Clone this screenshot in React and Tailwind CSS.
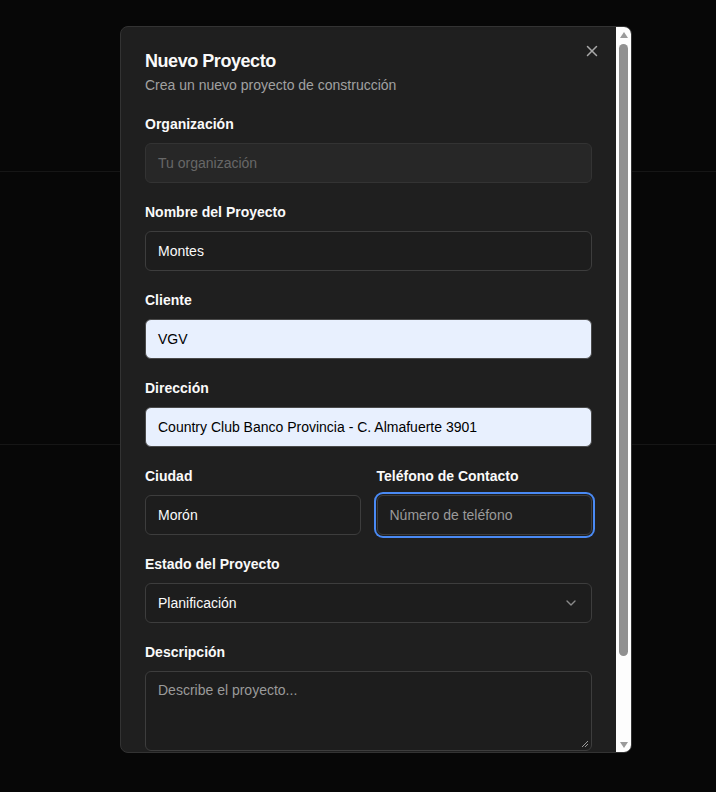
import React from "react";

function Label({ children }) {
  return (
    <div className="h-5 mb-2 text-[14px] leading-[18px] font-semibold text-[#fafafa]">
      {children}
    </div>
  );
}

const baseInput =
  "w-full h-10 rounded-md border px-3 text-[14px] leading-5 outline-none";

export default function App() {
  return (
    <div
      className="relative w-full h-[792px] overflow-hidden bg-[#070707]"
      style={{ fontFamily: '"Liberation Sans", Arial, sans-serif' }}
    >
      <div className="h-[172px] border-b border-[#161616]" />
      <div className="h-[273px] border-b border-[#161616]" />

      <div className="absolute left-[120px] top-[26px] w-[512px] h-[727px] rounded-lg border border-[#333333] bg-[#1f1f1f] flex overflow-hidden">
        <div className="relative flex-1 overflow-hidden px-6 pt-[25px]">
          <button className="absolute right-[15px] top-[15px] w-[18px] h-[18px] text-[#a8a8a8]">
            <svg width="18" height="18" viewBox="0 0 24 24" fill="none" stroke="currentColor" strokeWidth="2" strokeLinecap="round" strokeLinejoin="round">
              <path d="M18 6 6 18" />
              <path d="m6 6 12 12" />
            </svg>
          </button>

          <div className="text-[18px] leading-[18px] font-semibold text-[#fafafa] tracking-tight">
            Nuevo Proyecto
          </div>
          <div className="mt-1.5 h-5 text-[14px] leading-[18px] text-[#a1a1a1]">
            Crea un nuevo proyecto de construcción
          </div>

          <div className="mt-[19px] flex flex-col gap-5">
            <div>
              <Label>Organización</Label>
              <div className={baseInput + " flex items-center bg-[#272727] border-[#333333] text-[#676767]"}>
                Tu organización
              </div>
            </div>

            <div>
              <Label>Nombre del Proyecto</Label>
              <div className={baseInput + " flex items-center bg-[#1d1d1d] border-[#3d3d3d] text-[#fafafa]"}>
                Montes
              </div>
            </div>

            <div>
              <Label>Cliente</Label>
              <div className={baseInput + " flex items-center bg-[#e8f0fe] border-[#4a4a4a] text-black"}>
                VGV
              </div>
            </div>

            <div>
              <Label>Dirección</Label>
              <div className={baseInput + " flex items-center bg-[#e8f0fe] border-[#4a4a4a] text-black"}>
                Country Club Banco Provincia - C. Almafuerte 3901
              </div>
            </div>

            <div className="grid grid-cols-2 gap-4">
              <div>
                <Label>Ciudad</Label>
                <div className={baseInput + " flex items-center bg-[#1d1d1d] border-[#3d3d3d] text-[#fafafa]"}>
                  Morón
                </div>
              </div>
              <div>
                <Label>Teléfono de Contacto</Label>
                <div className={baseInput + " flex items-center bg-[#1d1d1d] border-[#3d3d3d] text-[#9a9a9a] ring-2 ring-[#4a8af4] ring-offset-1 ring-offset-[#1f1f1f]"}>
                  Número de teléfono
                </div>
              </div>
            </div>

            <div>
              <Label>Estado del Proyecto</Label>
              <div className={baseInput + " flex items-center justify-between bg-[#1d1d1d] border-[#3d3d3d] text-[#fafafa]"}>
                <span>Planificación</span>
                <svg width="16" height="16" viewBox="0 0 24 24" fill="none" stroke="#8a8a8a" strokeWidth="2" strokeLinecap="round" strokeLinejoin="round">
                  <path d="m6 9 6 6 6-6" />
                </svg>
              </div>
            </div>

            <div>
              <Label>Descripción</Label>
              <div className="relative w-full h-20 rounded-md border border-[#3d3d3d] bg-[#1d1d1d] px-3 py-2 text-[14px] leading-5 text-[#9a9a9a]">
                Describe el proyecto...
                <svg className="absolute right-[2px] bottom-[2px]" width="8" height="8" viewBox="0 0 8 8" stroke="#9a9a9a" strokeWidth="1">
                  <path d="M1 7 7 1M4 7 7 4" />
                </svg>
              </div>
            </div>
          </div>
        </div>

        <div className="w-[15px] h-full bg-[#fdfdfd] flex flex-col items-center">
          <div className="h-[15px] w-full flex items-center justify-center">
            <svg width="8" height="6" viewBox="0 0 8 6">
              <path d="M4 0 8 6 0 6Z" fill="#9a9a9a" />
            </svg>
          </div>
          <div className="mt-[2px] w-[9px] h-[612px] rounded-full bg-[#909090]" />
          <div className="flex-1" />
          <div className="h-[15px] w-full flex items-center justify-center">
            <svg width="8" height="6" viewBox="0 0 8 6">
              <path d="M0 0 8 0 4 6Z" fill="#9a9a9a" />
            </svg>
          </div>
        </div>
      </div>
    </div>
  );
}
